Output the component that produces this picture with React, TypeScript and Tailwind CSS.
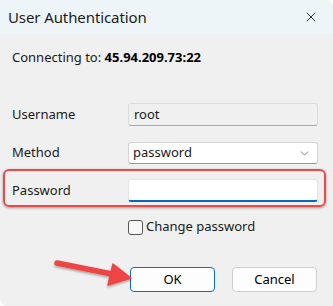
import { X, ChevronDown } from "lucide-react"

const font = { fontFamily: '"Noto Sans", "Open Sans", sans-serif' }

export default function App() {
  return (
    <div className="w-[333px] h-[306px] bg-white relative overflow-hidden" style={font}>
      <div className="w-full h-full bg-[#f0f0f0] rounded-tr-[8px] rounded-bl-[8px] flex flex-col text-[13px] text-[#1a1a1a]">
        {/* title bar */}
        <div className="h-[34px] bg-[#eef5f8] rounded-tr-[8px] flex items-center justify-between pl-[8px] pr-[14px] shrink-0">
          <span className="text-[15px] text-[#1b1b1b] tracking-[-0.1px]">User Authentication</span>
          <X size={16} strokeWidth={1.4} className="text-[#222]" />
        </div>

        <div className="pl-[12px] mt-[14px] h-[20px] flex items-center">
          Connecting to:&nbsp;<b className="font-bold text-black">45.94.209.73:22</b>
        </div>

        {/* username */}
        <div className="flex items-center pl-[12px] pr-[15px] mt-[35px]">
          <span className="w-[116px]">Username</span>
          <div className="flex-1 h-[23px] bg-[#f0f0f0] border border-[#dcdcdc] border-b-[#a8a8a8] rounded-[3px] flex items-center px-[5px]">
            root
          </div>
        </div>

        {/* method */}
        <div className="flex items-center pl-[12px] pr-[15px] mt-[16px]">
          <span className="w-[116px]">Method</span>
          <div className="flex-1 h-[22px] bg-white border border-[#d4d4d4] border-b-[#9a9a9a] rounded-[3px] flex items-center justify-between pl-[4px] pr-[6px]">
            <span>password</span>
            <ChevronDown size={13} strokeWidth={1.3} className="text-[#555]" />
          </div>
        </div>

        {/* password, highlighted */}
        <div className="ml-[3px] mr-[7px] mt-[5px] h-[38px] border-2 border-[#f04848] rounded-[6px] shadow-[0_1px_3px_rgba(0,0,0,0.35)] flex items-start pt-[8px] pl-[7px] pr-[6px]">
          <span className="w-[116px] h-[23px] flex items-center">Password</span>
          <div className="flex-1 h-[23px] bg-white border border-[#e3e3e3] border-b-2 border-b-[#0a64c2] rounded-[3px]" />
        </div>

        {/* checkbox */}
        <div className="flex items-center h-[16px] pl-[128px] mt-[12px]">
          <div className="w-[15px] h-[15px] border border-[#555] rounded-[3px] bg-[#f7f7f7]" />
          <span className="ml-[3px]">Change password</span>
        </div>

        {/* buttons */}
        <div className="flex justify-end gap-[17px] pr-[16px] mt-[32px]">
          <button className="w-[85px] h-[25px] bg-[#fdfdfd] border border-[#0a6ccf] rounded-[4px] text-[13px] text-black">OK</button>
          <button className="w-[85px] h-[25px] bg-[#fdfdfd] border border-[#d0d0d0] rounded-[4px] text-[13px] text-black">Cancel</button>
        </div>
      </div>

      {/* annotation arrow */}
      <svg className="absolute left-0 top-0 pointer-events-none" width="333" height="306">
        <defs>
          <filter id="sh" x="-20%" y="-20%" width="140%" height="160%">
            <feDropShadow dx="0" dy="1.5" stdDeviation="1.2" floodColor="#000" floodOpacity="0.35" />
          </filter>
        </defs>
        <g filter="url(#sh)" fill="#f04444">
          <line x1="57" y1="263" x2="112" y2="274" stroke="#f04444" strokeWidth="5.5" strokeLinecap="round" />
          <polygon points="113,264 131,278 108,285" strokeLinejoin="round" stroke="#f04444" strokeWidth="1.5" />
        </g>
      </svg>
    </div>
  )
}
